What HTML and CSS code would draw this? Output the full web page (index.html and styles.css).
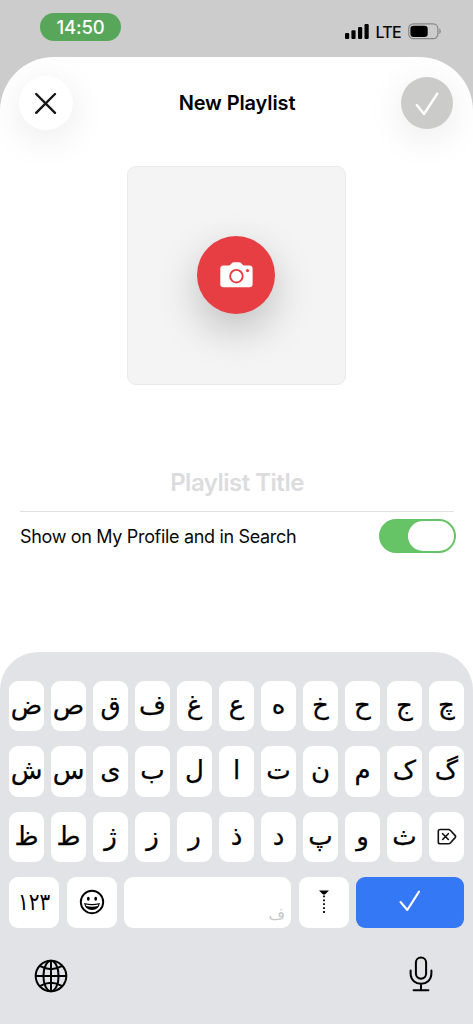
FILE: index.html
```html
<!DOCTYPE html>
<html lang="en">
<head>
<meta charset="utf-8">
<title>New Playlist</title>
<link rel="stylesheet" href="styles.css">
</head>
<body>
<div class="screen">
  <div class="status">
    <span class="clock">14:50</span>
    <div class="signals">
      <svg class="bars" width="25" height="16" viewBox="0 0 25 16"><rect x="0" y="10" width="4.2" height="6" rx="1.2"/><rect x="6.4" y="7.3" width="4.2" height="8.7" rx="1.2"/><rect x="13" y="4" width="4.2" height="12" rx="1.2"/><rect x="19.5" y="1" width="4.2" height="15" rx="1.2"/></svg>
      <span class="lte">LTE</span>
      <svg class="battery" width="34" height="17" viewBox="0 0 34 17"><rect x=".7" y=".9" width="29.2" height="14.8" rx="4.7" fill="none" stroke="#888" stroke-width="1.2"/><rect x="2.4" y="2.7" width="17.3" height="11.2" rx="3.2"/><path d="M31.3 5.6C33.3 6.6 33.3 10 31.3 11Z" fill="#888"/></svg>
    </div>
  </div>
  <main class="sheet">
    <header class="bar">
      <button class="round close" aria-label="Close"><svg width="54" height="54" viewBox="0 0 54 54"><path d="M17.2 18 36 36.8M36 18 17.2 36.8" stroke="#161617" stroke-width="2.4" stroke-linecap="round"/></svg></button>
      <h1>New Playlist</h1>
      <button class="round done" aria-label="Done"><svg width="52" height="52" viewBox="0 0 52 52"><path d="M15.8 28 23 37 36.3 16.7" fill="none" stroke="#fff" stroke-width="2.4" stroke-linecap="round" stroke-linejoin="round"/></svg></button>
    </header>
    <section class="cover">
      <div class="camera">
        <svg width="33" height="26" viewBox="0 0 33 26"><path d="M3.5 3.6H8.5Q10 3.6 10.8 2.3 12 .3 14 .3H19Q21 .3 22.2 2.3 23 3.6 24.5 3.6H29.3Q32.6 3.6 32.6 6.9V22Q32.6 25.2 29.3 25.2H3.5Q.3 25.2.3 22V6.9Q.3 3.6 3.5 3.6Z" fill="#fff"/><circle cx="16.4" cy="14.2" r="6.3" fill="#fff" stroke="#e73e44" stroke-width="1.9"/><circle cx="27.5" cy="8.6" r="1.6" fill="#e73e44"/></svg>
      </div>
    </section>
    <div class="title-field">Playlist Title</div>
    <div class="setting"><span>Show on My Profile and in Search</span><div class="toggle"><i></i></div></div>
  </main>
  <section class="keyboard">
    <div class="row"><b>ض</b><b>ص</b><b>ق</b><b>ف</b><b>غ</b><b>ع</b><b>ه</b><b>خ</b><b>ح</b><b>ج</b><b>چ</b></div>
    <div class="row"><b>ش</b><b>س</b><b>ی</b><b>ب</b><b>ل</b><b>ا</b><b>ت</b><b>ن</b><b>م</b><b>ک</b><b>گ</b></div>
    <div class="row"><b>ظ</b><b>ط</b><b>ژ</b><b>ز</b><b>ر</b><b>ذ</b><b>د</b><b>پ</b><b>و</b><b>ث</b><b class="icon"><svg width="20" height="18" viewBox="0 0 20 18" fill="none" stroke="#111" stroke-width="1.6" stroke-linejoin="round" stroke-linecap="round"><path d="M3.2 1.5H11.5Q12.6 1.5 13.3 2.2L18.2 7.6Q19 8.6 18.2 9.6L13.3 15Q12.6 15.8 11.5 15.8H3.2Q1.3 15.8 1.3 14V3.3Q1.3 1.5 3.2 1.5ZM5.7 5.7 11.3 11.5M11.3 5.7 5.7 11.5"/></svg></b></div>
    <div class="row bottom">
      <b class="icon numbers"><span>۱۲۳</span></b>
      <b class="icon"><svg width="26" height="26" viewBox="0 0 26 26"><circle cx="13" cy="13" r="11.2" fill="none" stroke="#000" stroke-width="1.9"/><ellipse cx="9.3" cy="9.8" rx="1.4" ry="2"/><ellipse cx="16.7" cy="9.8" rx="1.4" ry="2"/><path d="M5.1 14Q13 16 20.9 14 20 21 13 21 6 21 5.1 14Z"/><path d="M6.6 15.4Q13 16.9 19.4 15.4L18.8 17Q13 18.3 7.2 17Z" fill="#fff"/></svg></b>
      <b class="space"><span>ف</span></b>
      <b class="icon"><svg width="12" height="26" viewBox="0 0 12 26"><path d="M1 1.5H11L7.5 5Q6 6.2 4.5 5Z"/><path d="M6 6.5V26" stroke="#000" stroke-width="1.8" stroke-dasharray="1.8 2.1"/></svg></b>
      <b class="icon enter"><svg width="22" height="22" viewBox="0 0 22 22"><path d="M1.5 12 8.3 20 20 1.6" fill="none" stroke="#fff" stroke-width="2.1" stroke-linecap="round" stroke-linejoin="round"/></svg></b>
    </div>
    <div class="tools">
      <svg width="34" height="34" viewBox="0 0 34 34" fill="none" stroke="#000" stroke-width="2"><circle cx="17" cy="17" r="15.3"/><ellipse cx="17" cy="17" rx="7.6" ry="15.3"/><path d="M17 1.7V32.3M1.7 17H32.3M5.8 6.8Q17 13.5 28.2 6.8M5.8 27.2Q17 20.5 28.2 27.2"/></svg>
      <svg width="24" height="36" viewBox="0 0 24 36" fill="none" stroke="#000" stroke-width="2" stroke-linecap="round"><rect x="6.9" y="1.5" width="10.2" height="21.2" rx="5.1"/><path d="M1.6 14.5V17.3C1.6 31.3 22.4 31.3 22.4 17.3V14.5M12 28V34M4.6 34.3H19.4"/></svg>
    </div>
  </section>
</div>
</body>
</html>
```
FILE: styles.css
```css
* { box-sizing: border-box; }
body { margin: 0; font-family: Inter, sans-serif; color: #090909; }
.screen { width: 473px; height: 1024px; overflow: hidden; background: linear-gradient(#ccc 50%, #fff 50%); display: flex; flex-direction: column; }
.status { height: 57px; flex: none; display: flex; justify-content: space-between; padding: 13px 31px 0 40px; }
.clock { width: 81px; height: 28px; border-radius: 14px; background: #58a65a; color: #fff; font-size: 18.5px; font-weight: 500; line-height: 28px; text-align: center; letter-spacing: -.2px; }
.signals { display: flex; align-items: center; height: 36px; }
.lte { font: 500 16px/20px Inter, sans-serif; letter-spacing: -.7px; margin: 2px 7px 0 5px; }
.sheet { height: 595px; flex: none; background: #fff; border-radius: 54px 54px 0 0; overflow: hidden; }
.bar { display: flex; justify-content: space-between; padding: 19px 20px 0 19px; height: 109px; }
.bar h1 { margin: 15px 0 0; font-size: 20px; line-height: 24px; font-weight: 600; letter-spacing: -.12px; color: #000; }
.round { border: 0; padding: 0; border-radius: 50%; width: 54px; height: 54px; box-shadow: 0 8px 38px rgba(0,0,0,.09); }
.round svg { display: block; }
.close { background: #fff; }
.done { background: #cbcbca; width: 52px; height: 52px; margin-top: 1px; }
.cover { width: 219px; height: 219px; margin: 0 auto; border: 1px solid #e9e9e9; border-radius: 9px; background: #f4f4f4; display: grid; place-items: center; padding: 0 1px 1px 0; }
.camera { width: 78px; height: 78px; border-radius: 50%; background: #e73e44; display: grid; place-items: center; box-shadow: 0 16px 42px rgba(0,0,0,.22); }
.title-field { margin: 73px 19px 0 20px; height: 54px; border-bottom: 1px solid #e1e1e2; color: #dcdcde; font-size: 24px; font-weight: 600; line-height: 49px; text-align: center; letter-spacing: -.5px; }
.setting { display: flex; align-items: center; justify-content: space-between; padding: 7px 17px 0 20px; font-size: 18px; letter-spacing: -.33px; }
.toggle { width: 77px; height: 34px; background: #66c466; border-radius: 17px; padding: 2px; display: flex; justify-content: flex-end; }
.toggle i { width: 46px; height: 30px; border-radius: 15px; background: #fff; }
.keyboard { height: 372px; flex: none; background: #e2e3e7; padding: 28.6px 9px 0; display: flex; flex-direction: column; gap: 15px; border-radius: 38px 38px 0 0; }
.row { display: grid; grid-template-columns: repeat(11, 1fr); gap: 7px; height: 50.5px; flex: none; }
.row b { display: block; background: #fff; border-radius: 9px; text-align: center; font: 400 26px/48px "DejaVu Sans", sans-serif; color: #000; -webkit-text-stroke: .25px #000; direction: rtl; min-width: 0; white-space: nowrap; }
.row .icon { display: grid; place-items: center; }
.row.bottom { grid-template-columns: 50px 50px 1fr 50px 108px; gap: 7.5px; }
.row .numbers { -webkit-text-stroke: 0; font-size: 20px; line-height: 46px; }
.numbers span { transform: scaleY(1.18); }
.row .space { display: flex; justify-content: flex-end; align-items: flex-end; direction: ltr; padding: 0 6px 3px 0; font-size: 16px; line-height: 20px; color: #c8c8c8; -webkit-text-stroke: 0; }
.row .enter { background: #3478f6; padding-bottom: 2px; }
.tools { display: flex; justify-content: space-between; align-items: center; padding: 13px 31px 0 25px; }
.tools svg:first-child { margin-top: 3px; }
```
